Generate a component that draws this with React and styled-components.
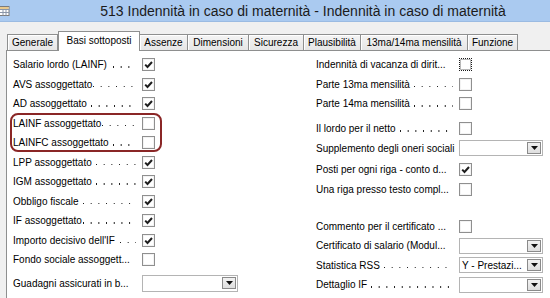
import React from 'react';
import styled, { createGlobalStyle } from 'styled-components';

const GlobalStyle = createGlobalStyle`
  html, body {
    margin: 0;
    padding: 0;
  }
  body {
    width: 550px;
    height: 298px;
    overflow: hidden;
    background: #f0f0f0;
    font-family: "Liberation Sans", Arial, sans-serif;
    color: #000;
  }
`;

const Window = styled.div`
  width: 550px;
  height: 298px;
  display: flex;
  flex-direction: column;
  background: #f0f0f0;
  overflow: hidden;
`;

const TitleBar = styled.div`
  flex: none;
  height: 22px;
  box-sizing: border-box;
  display: flex;
  align-items: center;
  background: #aacaf0;
  border-bottom: 1px solid #9bbbe2;
`;

const TitleText = styled.div`
  flex: 1;
  text-align: center;
  padding-left: 46px;
  font-size: 14px;
  color: #1b1b1b;
  white-space: nowrap;
`;

const TabStrip = styled.div`
  flex: none;
  height: 28px;
  box-sizing: border-box;
  display: flex;
  align-items: flex-end;
  padding-left: 7px;
`;

const Tab = styled.div`
  box-sizing: border-box;
  width: ${p => p.width}px;
  height: ${p => (p.active ? 20 : 16)}px;
  margin-bottom: ${p => (p.active ? -1 : 0)}px;
  position: relative;
  z-index: ${p => (p.active ? 2 : 1)};
  display: flex;
  align-items: center;
  justify-content: center;
  padding-bottom: ${p => (p.active ? 2 : 0)}px;
  font-size: 10px;
  white-space: nowrap;
  border-top: 1px solid #8e8f8f;
  border-right: 1px solid #8e8f8f;
  border-left: ${p => (p.active || p.first ? '1px solid #8e8f8f' : 'none')};
  background: ${p => (p.active ? '#ffffff' : 'linear-gradient(#f4f4f4, #e6e6e6)')};
  box-shadow: ${p => (p.active ? 'none' : 'inset 1px 1px 0 #ffffff')};
`;

const Panel = styled.div`
  flex: 1;
  margin-left: 6px;
  background: #ffffff;
  border-top: 1px solid #8e8f8f;
  border-left: 1px solid #8e8f8f;
  padding: 4px 0 0 6px;
  display: grid;
  grid-template-columns: 303px 227px;
  align-content: start;
`;

const Column = styled.div`
  position: relative;
  display: flex;
  flex-direction: column;
`;

const Row = styled.div`
  height: 19.5px;
  display: flex;
  align-items: center;
  margin-top: ${p => p.gap || 0}px;
  font-size: 10px;
`;

const Label = styled.div`
  width: ${p => p.width}px;
  margin-right: 4px;
  display: flex;
  white-space: nowrap;
`;

// dotted leader drawn as a repeating pattern up to the control
const Leader = styled.span`
  flex: 1;
  align-self: flex-end;
  height: 1.5px;
  margin: 0 2px 2.5px 0;
  background-image: linear-gradient(to right, #1a1a1a 1.4px, transparent 1.4px);
  background-size: 7.7px 1.5px;
  background-position: ${p => p.offset || 2}px 0;
  background-repeat: repeat-x;
`;

const Box = styled.div`
  box-sizing: border-box;
  width: 13px;
  height: 13px;
  background: #ffffff;
  border: 1px ${p => (p.focused ? 'dotted #1a1a1a' : 'solid #8f8f8f')};
  box-shadow: inset 0 0 0 1px ${p => (p.focused ? '#b9b9b9' : '#f3f3f3')};
  display: flex;
  align-items: center;
  justify-content: center;
`;

const Combo = styled.div`
  box-sizing: border-box;
  width: ${p => p.width}px;
  height: ${p => p.height || 16}px;
  border: 1px solid #b4b4b4;
  background: #ffffff;
  display: flex;
  align-items: center;
  padding: 0 1px 0 2px;
  font-size: 10px;
  white-space: nowrap;
`;

const ComboValue = styled.span`
  flex: 1;
  margin-right: 2px;
`;

const DropButton = styled.div`
  box-sizing: border-box;
  flex: none;
  width: 14px;
  height: 12px;
  border: 1px solid #8a8a8a;
  background: linear-gradient(#f2f2f2, #dedede);
  display: flex;
  align-items: center;
  justify-content: center;
`;

const Highlight = styled.div`
  position: absolute;
  left: -3px;
  top: 58px;
  width: 152px;
  height: 39px;
  box-sizing: border-box;
  border: 2px solid #8a2626;
  border-radius: 8px;
  pointer-events: none;
`;

const tabs = [
  { label: 'Generale', width: 51, first: true },
  { label: 'Basi sottoposti', width: 82, active: true },
  { label: 'Assenze', width: 48 },
  { label: 'Dimensioni', width: 61 },
  { label: 'Sicurezza', width: 55 },
  { label: 'Plausibilità', width: 57 },
  { label: '13ma/14ma mensilità', width: 107 },
  { label: 'Funzione', width: 50 },
];

const leftRows = [
  { text: 'Salario lordo (LAINF)', dots: true, offset: 6, checked: true },
  { text: 'AVS assoggettato', dots: true, offset: 1, checked: true },
  { text: 'AD assoggettato', dots: true, offset: 4, checked: true },
  { text: 'LAINF assoggettato', dots: true, offset: 1 },
  { text: 'LAINFC assoggettato', dots: true, offset: 4 },
  { text: 'LPP assoggettato', dots: true, offset: 4, checked: true },
  { text: 'IGM  assoggettato', dots: true, offset: 4, checked: true },
  { text: 'Obbligo fiscale', dots: true, offset: 4, checked: true },
  { text: 'IF assoggettato', dots: true, offset: 1, checked: true },
  { text: "Importo decisivo dell'IF", dots: true, offset: 5, checked: true },
  { text: 'Fondo sociale assoggett...' },
  { text: 'Guadagni assicurati in b...', combo: { width: 96, height: 17 }, gap: 4 },
];

const rightRows = [
  { text: 'Indennità di vacanza di dirit...', focused: true },
  { text: 'Parte 13ma mensilità', dots: true, offset: 4 },
  { text: 'Parte 14ma mensilità', dots: true, offset: 4 },
  { text: 'Il lordo per il netto', dots: true, offset: 4, gap: 5.5 },
  { text: 'Supplemento degli oneri sociali', combo: { width: 84 } },
  { text: 'Posti per ogni riga - conto d...', checked: true, gap: 2 },
  { text: 'Una riga presso testo compl...' },
  { text: 'Commento per il certificato ...', gap: 17.5 },
  { text: 'Certificato di salario (Modul...', combo: { width: 84 } },
  { text: 'Statistica RSS', dots: true, offset: 4, combo: { width: 84, value: 'Y - Prestazi...' } },
  { text: 'Dettaglio IF', dots: true, offset: 4, combo: { width: 84 } },
];

const WindowIcon = () => (
  <svg width="10" height="10" viewBox="0 0 10 10">
    <rect x="-3" y="0.5" width="12" height="9" fill="#ffffff" stroke="#7b7b7b" />
    <rect x="-2.5" y="1" width="11" height="2.5" fill="#e9c98d" />
    <path d="M-3 3.5H9M-3 6.5H9M3 3.5V9.5M6 3.5V9.5" stroke="#8a96a8" strokeWidth="1" />
  </svg>
);

const CheckMark = () => (
  <svg width="11" height="11" viewBox="0 0 11 11">
    <path d="M2.2 5.6 L4.5 8 L9 3" fill="none" stroke="#1e1e1e" strokeWidth="2" />
  </svg>
);

const Arrow = () => (
  <svg width="7" height="4" viewBox="0 0 7 4">
    <path d="M0 0H7L3.5 4Z" fill="#111" />
  </svg>
);

const Field = ({ row, labelWidth }) => (
  <Row gap={row.gap}>
    <Label width={labelWidth}>
      <span>{row.text}</span>
      {row.dots && <Leader offset={row.offset} />}
    </Label>
    {row.combo ? (
      <Combo width={row.combo.width} height={row.combo.height}>
        <ComboValue>{row.combo.value || ''}</ComboValue>
        <DropButton>
          <Arrow />
        </DropButton>
      </Combo>
    ) : (
      <Box focused={row.focused}>{row.checked && <CheckMark />}</Box>
    )}
  </Row>
);

const App = () => (
  <Window>
    <GlobalStyle />
    <TitleBar>
      <WindowIcon />
      <TitleText>513 Indennità in caso di maternità - Indennità in caso di maternità</TitleText>
    </TitleBar>
    <TabStrip>
      {tabs.map(t => (
        <Tab key={t.label} width={t.width} active={t.active} first={t.first}>
          {t.label}
        </Tab>
      ))}
    </TabStrip>
    <Panel>
      <Column>
        {leftRows.map(r => (
          <Field key={r.text} row={r} labelWidth={125} />
        ))}
        <Highlight />
      </Column>
      <Column>
        {rightRows.map(r => (
          <Field key={r.text} row={r} labelWidth={139} />
        ))}
      </Column>
    </Panel>
  </Window>
);

export default App;
